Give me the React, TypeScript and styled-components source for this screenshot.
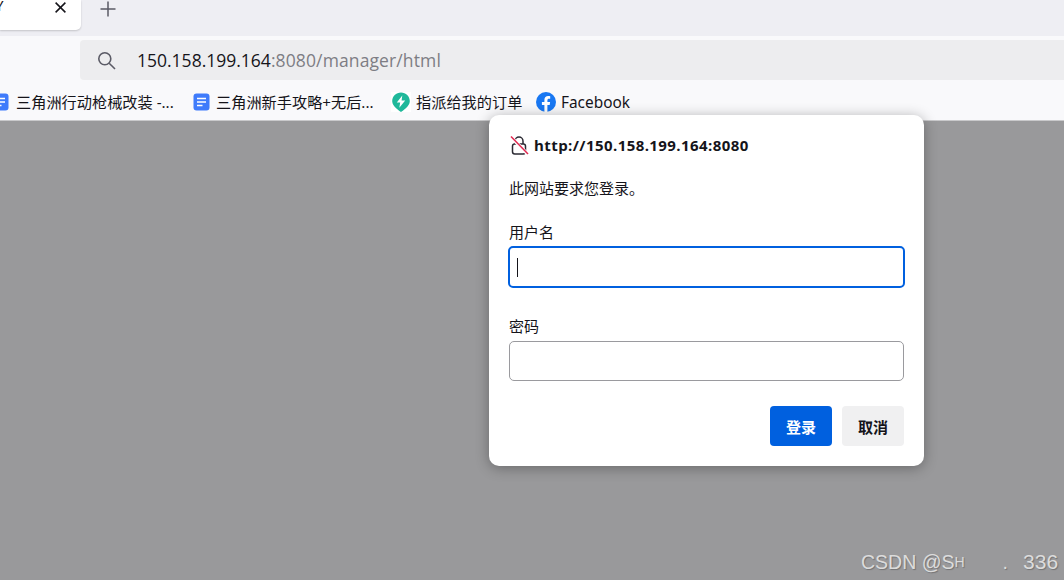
import React from "react";
import styled, { createGlobalStyle } from "styled-components";

const Global = createGlobalStyle`
  html, body { margin: 0; padding: 0; width: 1064px; height: 580px; overflow: hidden; }
  * { box-sizing: border-box; }
`;

const UI = `"Open Sans", "Noto Sans CJK SC", sans-serif`;
const CJK = `"Noto Sans", "Noto Sans CJK SC", sans-serif`;

const Page = styled.div`
  position: relative;
  width: 1064px;
  height: 580px;
  overflow: hidden;
  display: flex;
  flex-direction: column;
  background: #99999b;
  font-family: ${CJK};
`;
const TabStrip = styled.div`
  height: 36px;
  flex: none;
  display: flex;
  align-items: flex-start;
  background: #eeeef3;
`;
const Tab = styled.div`
  width: 81px;
  height: 30px;
  flex: none;
  display: flex;
  align-items: flex-start;
  justify-content: space-between;
  padding: 2px 15px 0 0;
  background: #fff;
  border-radius: 0 0 5px 0;
  box-shadow: 0 1px 2px rgba(0, 0, 0, 0.18);
  color: #15141a;
`;
const TabGlyph = styled.span`
  margin-left: -5px;
  margin-top: -7px;
  font-size: 15px;
`;
const NewTab = styled.div`
  width: 16px;
  height: 16px;
  margin: 1px 0 0 19px;
  color: #5b5b66;
  display: flex;
`;
const Toolbar = styled.div`
  height: 49px;
  flex: none;
  padding: 4px 0 5px 80px;
  background: #f9f9fb;
`;
const AddressBar = styled.div`
  height: 40px;
  display: flex;
  align-items: center;
  padding-left: 17px;
  gap: 21px;
  border-radius: 4px 0 0 4px;
  background: #ededef;
  font-family: ${UI};
  font-size: 17.5px;
`;
const Host = styled.span`
  color: #15141a;
`;
const Rest = styled.span`
  color: #7d7d84;
  letter-spacing: 0.12px;
`;
const UrlText = styled.div`
  white-space: nowrap;
`;
const Bookmarks = styled.div`
  height: 36px;
  flex: none;
  display: flex;
  align-items: center;
  padding: 0 0 1px;
  background: #f9f9fb;
  border-bottom: 1px solid #c9c9cb;
`;
const Bookmark = styled.div<{ $ml: number; $w: number; $gap?: number }>`
  display: flex;
  align-items: center;
  gap: ${(p) => p.$gap ?? 6}px;
  width: ${(p) => p.$w}px;
  margin-left: ${(p) => p.$ml}px;
  flex: none;
  font-size: 15.2px;
  line-height: 22px;
  color: #15141a;
  white-space: nowrap;
`;
const Label = styled.span`
  margin-top: -1px;
`;
const Latin = styled.span`
  font-size: 15.4px;
  margin-top: 1px;
`;
const Dialog = styled.div`
  position: absolute;
  left: 489px;
  top: 115px;
  width: 435px;
  height: 351px;
  padding: 20px;
  background: #fff;
  border-radius: 10px;
  box-shadow: 0 2px 14px rgba(0, 0, 0, 0.32);
  display: flex;
  flex-direction: column;
  color: #15141a;
`;
const Origin = styled.div`
  display: flex;
  align-items: center;
  height: 20px;
  gap: 4px;
  font-family: ${UI};
  font-size: 15px;
  font-weight: 700;
  letter-spacing: 0.42px;
`;
const Message = styled.div`
  margin-top: 23px;
  height: 20px;
  line-height: 20px;
  font-size: 15px;
`;
const FieldLabel = styled.div<{ $top: number }>`
  margin-top: ${(p) => p.$top}px;
  height: 20px;
  line-height: 20px;
  font-size: 15px;
`;
const Field = styled.div<{ $focused?: boolean }>`
  margin: ${(p) => (p.$focused ? "4px -1px 0" : "5px 0 0")};
  height: ${(p) => (p.$focused ? 42 : 40)}px;
  border-radius: 5px;
  border: ${(p) => (p.$focused ? "2px solid #0060df" : "1px solid #9a9a9e")};
  display: flex;
  align-items: center;
  padding-left: 7px;
`;
const Caret = styled.div`
  width: 1px;
  height: 19px;
  background: #15141a;
`;
const Actions = styled.div`
  margin-top: 25px;
  display: flex;
  justify-content: flex-end;
  gap: 10px;
`;
const Button = styled.div<{ $primary?: boolean }>`
  width: 62px;
  height: 40px;
  border-radius: 4px;
  display: flex;
  align-items: center;
  justify-content: center;
  font-size: 15px;
  font-weight: 700;
  background: ${(p) => (p.$primary ? "#0060df" : "#f0f0f1")};
  color: ${(p) => (p.$primary ? "#fff" : "#15141a")};
`;
const Watermark = styled.div`
  position: absolute;
  left: 861px;
  top: 550px;
  display: flex;
  font-family: "Liberation Sans", sans-serif;
  font-size: 19.5px;
  line-height: 24px;
  color: #dcdcdc;
  text-shadow: 1px 1px 1px rgba(0, 0, 0, 0.25);
  white-space: pre;
`;
const SmallCap = styled.span`
  font-size: 14px;
`;
const Dot = styled.span`
  margin-left: 38px;
`;
const Digits = styled.span`
  margin-left: 15px;
  font-size: 21px;
`;

const Doc = () => (
  <svg width="17" height="18" viewBox="0 0 17 18" style={{ flex: "none" }}>
    <rect x="0.5" y="0.5" width="16" height="17" rx="3" fill="#3f7bfb" />
    <path d="M4 5.5h9M4 9h9M4 12.5h5.5" stroke="#fff" strokeWidth="1.4" fill="none" />
  </svg>
);
const Bolt = () => (
  <svg width="20" height="20" viewBox="0 0 20 20" style={{ flex: "none", margin: "0 -1px" }}>
    <rect width="20" height="20" fill="#fff" />
    <path d="M10 20C8.8 19 1.2 14.4 1.2 9.2 1.2 4.2 5.1 0.5 10 0.5s8.8 3.7 8.8 8.7C18.8 14.4 11.2 19 10 20Z" fill="#1fb89a" />
    <path d="M11.3 3.6 5.8 10.6H9.2L8.3 15.8 14.2 8.6H10.6Z" fill="#fff" />
  </svg>
);
const Fb = () => (
  <svg width="20" height="20" viewBox="0 0 20 20" style={{ flex: "none" }}>
    <circle cx="10" cy="10" r="10" fill="#1877f2" />
    <path d="M11.4 20V12.9H13.7L14.1 10H11.4V8.3C11.4 7.4 11.8 6.8 13 6.8H14.2V4.3C13.6 4.2 12.9 4.1 12.2 4.1 9.9 4.1 8.4 5.5 8.4 7.9V10H5.9V12.9H8.4V20Z" fill="#fff" />
  </svg>
);
const Lock = () => (
  <svg width="21" height="21" viewBox="0 0 21 21" style={{ flex: "none" }}>
    <path d="M6 9V6.2C6 3.9 7.8 2 10 2s4 1.9 4 4.2V9" fill="none" stroke="#2b2a33" strokeWidth="1.5" />
    <rect x="3.5" y="9" width="13" height="10" rx="2.2" fill="none" stroke="#2b2a33" strokeWidth="1.5" />
    <path d="M2 2 19 19.5" stroke="#fff" strokeWidth="3.4" />
    <path d="M2 1.5 19 19" stroke="#e22850" strokeWidth="1.5" />
  </svg>
);

export default function App() {
  return (
    <Page>
      <Global />
      <TabStrip>
        <Tab>
          <TabGlyph>Y</TabGlyph>
          <svg width="11" height="11" viewBox="0 0 11 11">
            <path d="M0.6 0.6 10.4 10.4M10.4 0.6 0.6 10.4" stroke="#15141a" strokeWidth="1.5" fill="none" />
          </svg>
        </Tab>
        <NewTab>
          <svg width="16" height="16" viewBox="0 0 16 16">
            <path d="M8 0.5V15.5M0.5 8H15.5" stroke="#5b5b66" strokeWidth="1.5" fill="none" />
          </svg>
        </NewTab>
      </TabStrip>
      <Toolbar>
        <AddressBar>
          <svg width="19" height="19" viewBox="0 0 19 19" style={{ flex: "none" }}>
            <circle cx="7.8" cy="7.8" r="6" fill="none" stroke="#5b5b66" strokeWidth="1.6" />
            <path d="M12.2 12.2 18 18" stroke="#5b5b66" strokeWidth="1.6" />
          </svg>
          <UrlText>
            <Host>150.158.199.164</Host>
            <Rest>:8080/manager/html</Rest>
          </UrlText>
        </AddressBar>
      </Toolbar>
      <Bookmarks>
        <Bookmark $ml={-8} $w={183} $gap={7}><Doc /><Label>三角洲行动枪械改装 -...</Label></Bookmark>
        <Bookmark $ml={18} $w={183}><Doc /><Label>三角洲新手攻略+无后...</Label></Bookmark>
        <Bookmark $ml={16} $w={144}><Bolt /><Label>指派给我的订单</Label></Bookmark>
        <Bookmark $ml={0} $w={110} $gap={5}><Fb /><Latin>Facebook</Latin></Bookmark>
      </Bookmarks>
      <Dialog>
        <Origin><Lock />http://150.158.199.164:8080</Origin>
        <Message>此网站要求您登录。</Message>
        <FieldLabel $top={24}>用户名</FieldLabel>
        <Field $focused><Caret /></Field>
        <FieldLabel $top={28}>密码</FieldLabel>
        <Field />
        <Actions>
          <Button $primary>登录</Button>
          <Button>取消</Button>
        </Actions>
      </Dialog>
      <Watermark>CSDN @S<SmallCap>H</SmallCap><Dot>.</Dot><Digits>336</Digits></Watermark>
    </Page>
  );
}
